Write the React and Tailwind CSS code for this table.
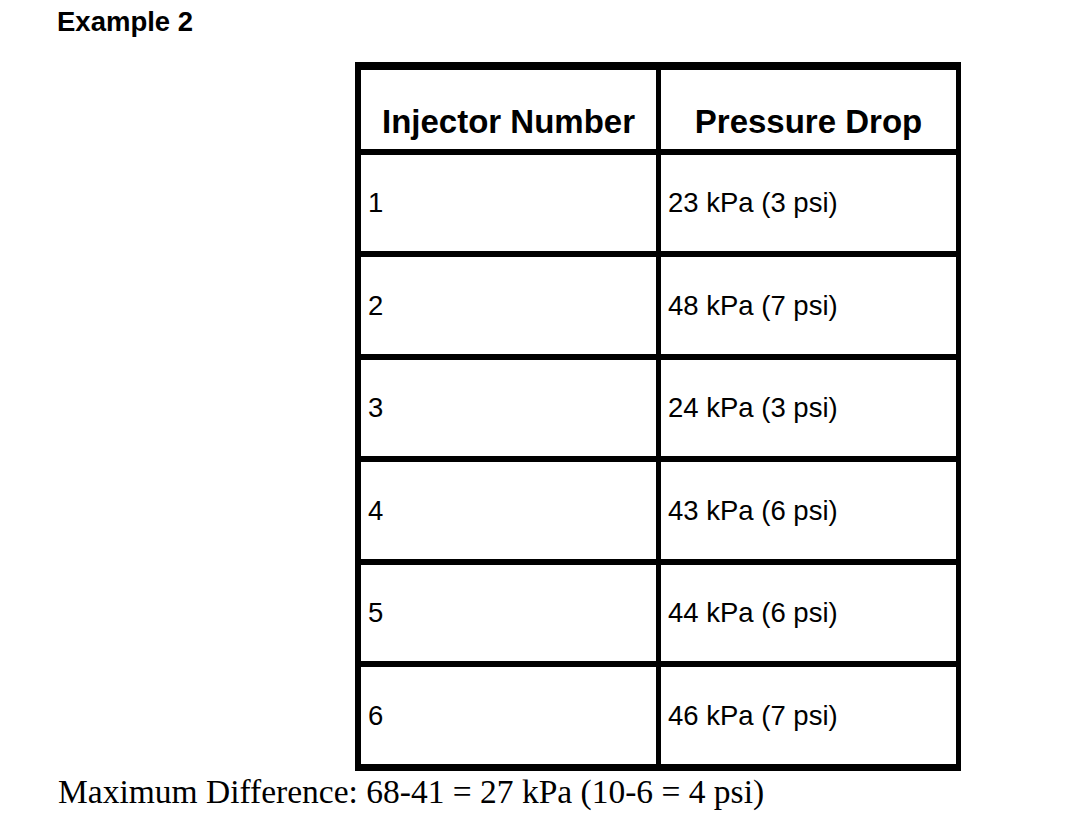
const rows = [
  { id: "1", drop: "23 kPa (3 psi)" },
  { id: "2", drop: "48 kPa (7 psi)" },
  { id: "3", drop: "24 kPa (3 psi)" },
  { id: "4", drop: "43 kPa (6 psi)" },
  { id: "5", drop: "44 kPa (6 psi)" },
  { id: "6", drop: "46 kPa (7 psi)" },
];

export default function App() {
  return (
    <div className="w-[1072px] h-[838px] bg-white text-black font-['Liberation_Sans',Arial,sans-serif]">
      {/* heading */}
      <p className="pl-[57px] pt-[8px] text-[27.5px] font-bold leading-none">Example 2</p>

      {/* table */}
      <div className="ml-[355px] mt-[26px] w-[606px] border-black border-l-[6px] border-r-[5px] border-t-[8px] border-b-[7px]">
        <div className="flex h-[79px]">
          <div className="w-[300px] border-r-[5px] border-black flex items-end justify-center pb-[11px]">
            <span className="text-[33px] font-bold leading-none">Injector Number</span>
          </div>
          <div className="flex-1 flex items-end justify-center pb-[11px]">
            <span className="text-[33px] font-bold leading-none">Pressure Drop</span>
          </div>
        </div>
        {rows.map((row) => (
          <div key={row.id} className="flex h-[102.5px] border-t-[6px] border-black">
            <div className="w-[300px] border-r-[5px] border-black flex items-center pl-[7px]">
              <span className="text-[27.5px] leading-none">{row.id}</span>
            </div>
            <div className="flex-1 flex items-center pl-[7px]">
              <span className="text-[27.5px] leading-none">{row.drop}</span>
            </div>
          </div>
        ))}
      </div>

      {/* note */}
      <p className="pl-[58px] mt-[4px] text-[33.5px] leading-none font-['Liberation_Serif','Times_New_Roman',serif]">
        Maximum Difference: 68-41 = 27 kPa (10-6 = 4 psi)
      </p>
    </div>
  );
}
